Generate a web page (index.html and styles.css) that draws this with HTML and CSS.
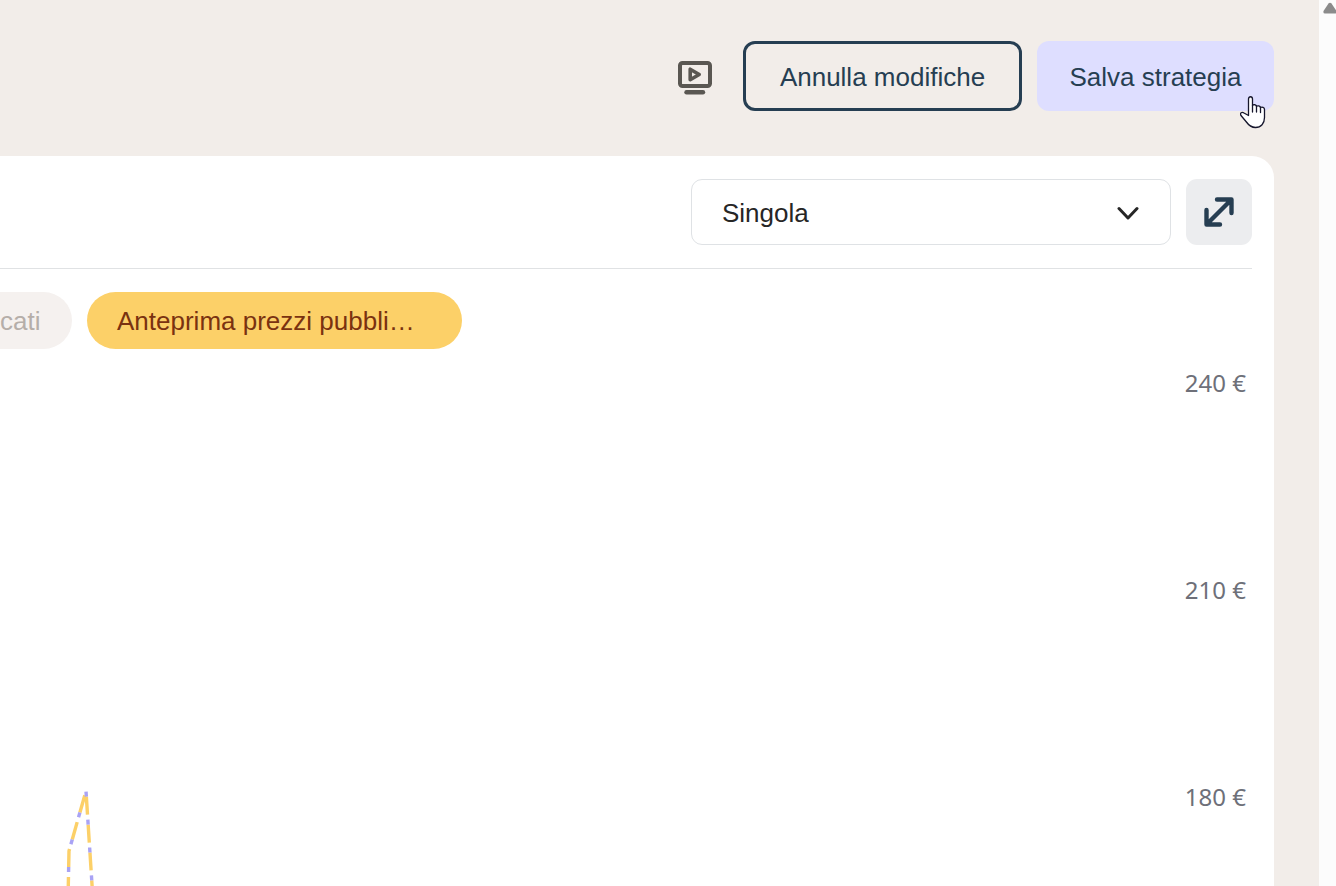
FILE: index.html
```html
<!DOCTYPE html>
<html lang="it">
<head>
<meta charset="utf-8">
<meta name="viewport" content="width=device-width, initial-scale=1">
<title>Strategia</title>
<link rel="stylesheet" href="styles.css">
</head>
<body>
<main class="page">
  <header class="topbar">
    <button class="icon-button" type="button" aria-label="Video">
      <svg width="34" height="34" viewBox="0 0 34 34" fill="none" stroke="currentColor" stroke-width="4" stroke-linecap="round" stroke-linejoin="round">
        <rect x="2" y="2" width="30" height="23" rx="2.500"/>
        <path d="M12.200 8.200v10.600l9-5.300z" stroke-width="3.600"/>
        <path d="M8.500 31.200h16.500" stroke-width="4.400"/>
      </svg>
    </button>
    <button class="button button-outline" type="button">Annulla modifiche</button>
    <div class="save">
      <button class="button button-primary" type="button">Salva strategia</button>
      <svg class="cursor" width="26" height="33" viewBox="0 0 26 33" fill="#fff" stroke="#16162c" stroke-width="1.300" stroke-linejoin="round" stroke-linecap="round">
        <path d="M8.500 19.500V3c0-3 4-3 4 0v6.500c1-1.400 3.600-.9 4 .8 1.200-1 3.600-.4 4 1.200 1.500-.8 4-.2 4 2v8c0 6-3.500 10-9 10-4.500 0-7-2.500-9.500-6L1 19.500c-1.500-2.500 1-4 3-2.500z"/>
        <path d="M12.500 9.500v6.500M16.500 10v6M20.500 11.500v5" fill="none"/>
      </svg>
    </div>
  </header>

  <section class="card">
    <div class="toolbar">
      <div class="select">
        <select class="select-field" aria-label="Camera">
          <option>Singola</option>
        </select>
        <svg class="select-arrow" width="22" height="16" viewBox="0 0 22 16" fill="none" stroke="currentColor" stroke-width="3" stroke-linecap="round" stroke-linejoin="round"><path d="M2 4.500l9 9.500 9-9.500"/></svg>
      </div>
      <button class="expand" type="button" aria-label="Espandi">
        <svg width="30" height="30" viewBox="0 0 30 30" fill="none" stroke="currentColor" stroke-width="4.400" stroke-linecap="round" stroke-linejoin="round">
          <path d="M13 2.500h14.500V16M2.500 13v14.500H16M27 3L3 27"/>
        </svg>
      </button>
    </div>
    <div class="legend">
      <button class="chip chip-muted" type="button">cati</button>
      <button class="chip chip-active" type="button">Anteprima prezzi pubbli…</button>
    </div>
    <div class="chart">
      <svg class="plot" width="200" height="537" viewBox="0 349 200 537" fill="none" stroke-width="3.400">
        <path stroke="#fcd068" stroke-dasharray="0 5 18 5" d="M68 900L69 851L86 791L93 900"/>
        <path stroke="#a9a3f5" stroke-dasharray="5 23" d="M68 900L69 851L86 791L93 900"/>
      </svg>
      <div class="axis">
        <span>240 €</span>
        <span>210 €</span>
        <span>180 €</span>
      </div>
    </div>
  </section>
</main>
<div class="scrollbar">
  <svg width="14" height="12" viewBox="0 0 14 12" fill="#8b8b8b"><path d="M5.500 1.500Q7 0 8.500 1.500L13.500 9Q14 11.500 12 11.500H2Q0 11.500 .5 9z"/></svg>
</div>
</body>
</html>
```
FILE: styles.css
```css
* {
  box-sizing: border-box;
}

body {
  margin: 0;
  display: flex;
  height: 100vh;
  overflow: hidden;
  background: #f2ede9;
  font-family: "Liberation Sans", Arial, sans-serif;
  font-size: 26px;
  line-height: 32px;
}

button,
select {
  margin: 0;
  border: 0;
  font: inherit;
}

svg {
  display: block;
}

.page {
  flex: 1;
  min-width: 0;
  display: flex;
  flex-direction: column;
  padding-right: 45px;
}

.topbar {
  display: flex;
  justify-content: flex-end;
  align-items: center;
  gap: 15px;
  padding: 41px 0 45px;
}

.icon-button {
  padding: 3px 0 0;
  margin-right: 16px;
  background: none;
  color: #5a5752;
}

.button {
  height: 70px;
  padding: 2px 28px 0;
  border-radius: 12px;
  color: #263e52;
  white-space: nowrap;
}

.button-outline {
  min-width: 279px;
  border: 3px solid #263e52;
  background: transparent;
}

.button-primary {
  min-width: 237px;
  background: #dedeff;
}

.save {
  position: relative;
}

.cursor {
  position: absolute;
  right: 8px;
  bottom: -18px;
}

.card {
  flex: 1;
  display: flex;
  flex-direction: column;
  min-height: 0;
  padding-right: 22px;
  border-top-right-radius: 22px;
  background: #fff;
}

.toolbar {
  display: flex;
  justify-content: flex-end;
  gap: 15px;
  padding: 23px 0;
  border-bottom: 1px solid #e0e2e4;
}

.select {
  display: grid;
  align-items: center;
  width: 480px;
}

.select-field {
  grid-area: 1 / 1;
  width: 100%;
  height: 66px;
  padding: 2px 30px 0;
  border: 1px solid #dfe2e5;
  border-radius: 11px;
  background: #fff;
  color: #262626;
  appearance: none;
}

.select-arrow {
  grid-area: 1 / 1;
  justify-self: end;
  margin-right: 32px;
  color: #262626;
  pointer-events: none;
}

.expand {
  display: grid;
  place-items: center;
  width: 66px;
  height: 66px;
  padding: 0;
  border-radius: 11px;
  background: #ecedef;
  color: #263e52;
}

.legend {
  display: flex;
  gap: 15px;
  padding-top: 23px;
}

.chip {
  height: 57px;
  padding: 0 30px;
  border-radius: 29px;
  white-space: nowrap;
  text-align: left;
}

.chip-muted {
  width: 72px;
  padding-left: 0;
  border-radius: 0 29px 29px 0;
  background: #f5f1ef;
  color: #b5aea9;
}

.chip-active {
  width: 375px;
  background: #fcd068;
  color: #7a3210;
}

.chart {
  flex: 1;
  display: flex;
  justify-content: space-between;
  min-height: 0;
  overflow: hidden;
}

.axis {
  display: flex;
  flex-direction: column;
  gap: 175px;
  padding: 18px 6px 0 0;
  color: #6e7079;
  font-family: "Noto Sans", "Open Sans", sans-serif;
  font-size: 24px;
  text-align: right;
}

.scrollbar {
  width: 17px;
  padding: 2px 0 0 4px;
  overflow: hidden;
  background: #fcfcfc;
}
```
